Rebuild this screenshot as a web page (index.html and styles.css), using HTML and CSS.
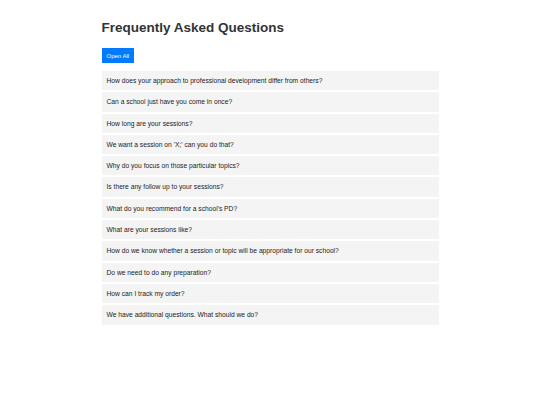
FILE: index.html
```html
<!DOCTYPE html>
<html lang="en">
<head>
  <meta charset="UTF-8" />
  <meta name="viewport" content="width=device-width, initial-scale=1.0" />
  <title>FAQ</title>
  <link rel="stylesheet" href="styles.css">
</head>
<body>
  <div class="faq">
    <h1>Frequently Asked Questions</h1>

    <button class="open-all" onclick="toggleAll()">Open All</button>

    <div class="faq-list">
      <div class="faq-item"><div class="question">How does your approach to professional development differ from others?</div></div>
      <div class="faq-item"><div class="question">Can a school just have you come in once?</div></div>
      <div class="faq-item"><div class="question">How long are your sessions?</div></div>
      <div class="faq-item"><div class="question">We want a session on 'X;' can you do that?</div></div>
      <div class="faq-item"><div class="question">Why do you focus on those particular topics?</div></div>
      <div class="faq-item"><div class="question">Is there any follow up to your sessions?</div></div>
      <div class="faq-item"><div class="question">What do you recommend for a school's PD?</div></div>
      <div class="faq-item"><div class="question">What are your sessions like?</div></div>
      <div class="faq-item"><div class="question">How do we know whether a session or topic will be appropriate for our school?</div></div>
      <div class="faq-item"><div class="question">Do we need to do any preparation?</div></div>
      <div class="faq-item"><div class="question">How can I track my order?</div></div>
      <div class="faq-item"><div class="question">We have additional questions. What should we do?</div></div>
    </div>
  </div>

  <script>
    function toggleAll() {
      const btn = document.querySelector('.open-all');
      const items = document.querySelectorAll('.faq-item');
      const open = btn.innerText === 'Open All';
      items.forEach(function (item) {
        item.classList.toggle('open', open);
      });
      btn.innerText = open ? 'Close All' : 'Open All';
    }
  </script>
</body>
</html>
```

FILE: styles.css
```css
body {
  font-family: "Liberation Sans", Arial, sans-serif;
  background: #ffffff;
  color: #222;
  margin: 0;
}

.faq {
  width: 337px;
  margin: 0 auto;
  padding-top: 20px;
}

h1 {
  font-size: 13.5px;
  color: #333;
  margin: 0 0 13px 0;
}

.open-all {
  display: block;
  background-color: #007bff;
  color: white;
  border: none;
  font-family: inherit;
  font-size: 6px;
  padding: 0 5px;
  height: 15px;
  cursor: pointer;
  margin-bottom: 8px;
}

.faq-list {
  display: flex;
  flex-direction: column;
  gap: 2px;
}

.faq-item {
  background: #f4f4f4;
}

.question {
  font-size: 6.7px;
  height: 19.3px;
  line-height: 19.3px;
  padding: 0 5px;
  cursor: pointer;
}
```
